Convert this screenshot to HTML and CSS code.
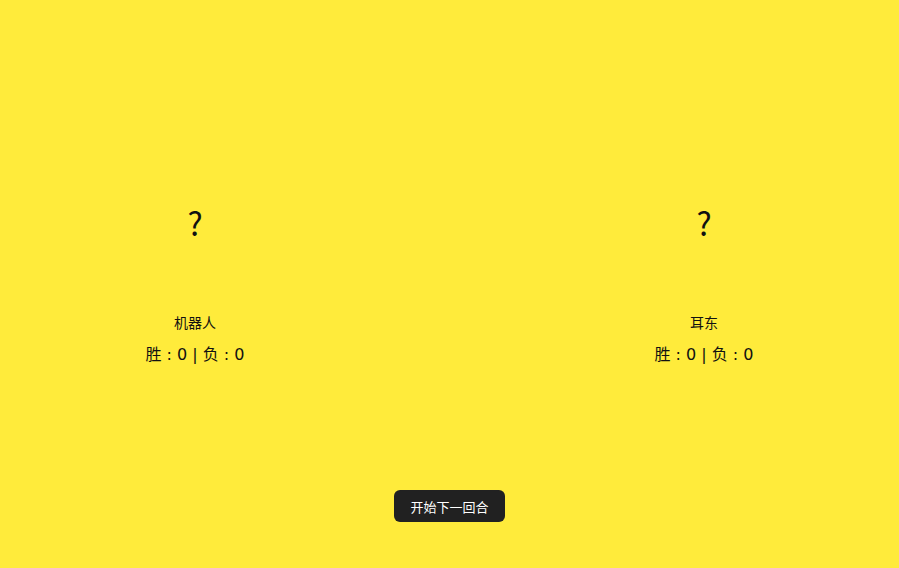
FILE: index.html
```html
<!DOCTYPE html>
<html lang="zh">
<head>
<meta charset="utf-8">
<link rel="stylesheet" href="styles.css">
</head>
<body>
<div class="page">
  <div class="players">
    <div class="player">
      <div class="hand">?</div>
      <div class="name">机器人</div>
      <div class="score">胜 : 0 | 负 : 0</div>
    </div>
    <div class="player">
      <div class="hand">?</div>
      <div class="name">耳东</div>
      <div class="score">胜 : 0 | 负 : 0</div>
    </div>
  </div>
  <div class="actions">
    <button class="next">开始下一回合</button>
  </div>
</div>
</body>
</html>
```
FILE: styles.css
```css
html, body {
  margin: 0;
  padding: 0;
  background: #ffeb3b;
}
body {
  font-family: "Noto Sans CJK SC", "Noto Sans", sans-serif;
  color: #111;
}
.page {
  width: 899px;
  height: 568px;
  display: flex;
  flex-direction: column;
}
.players {
  display: flex;
  justify-content: space-between;
  padding-top: 197px;
}
.player {
  width: 390px;
  display: flex;
  flex-direction: column;
  align-items: center;
}
.hand {
  font-size: 32px;
  line-height: 50px;
  height: 50px;
}
.name {
  margin-top: 65px;
  font-size: 14px;
  line-height: 20px;
}
.score {
  margin-top: 11px;
  font-family: "DejaVu Sans", "Noto Sans CJK SC", sans-serif;
  font-size: 16px;
  line-height: 24px;
}
.actions {
  margin-top: auto;
  padding-bottom: 46px;
  display: flex;
  justify-content: center;
}
.next {
  background: #212121;
  color: #fff;
  border: none;
  border-radius: 6px;
  height: 32px;
  padding: 0 16px;
  font-family: "Noto Sans CJK SC", sans-serif;
  font-size: 13px;
}
```
